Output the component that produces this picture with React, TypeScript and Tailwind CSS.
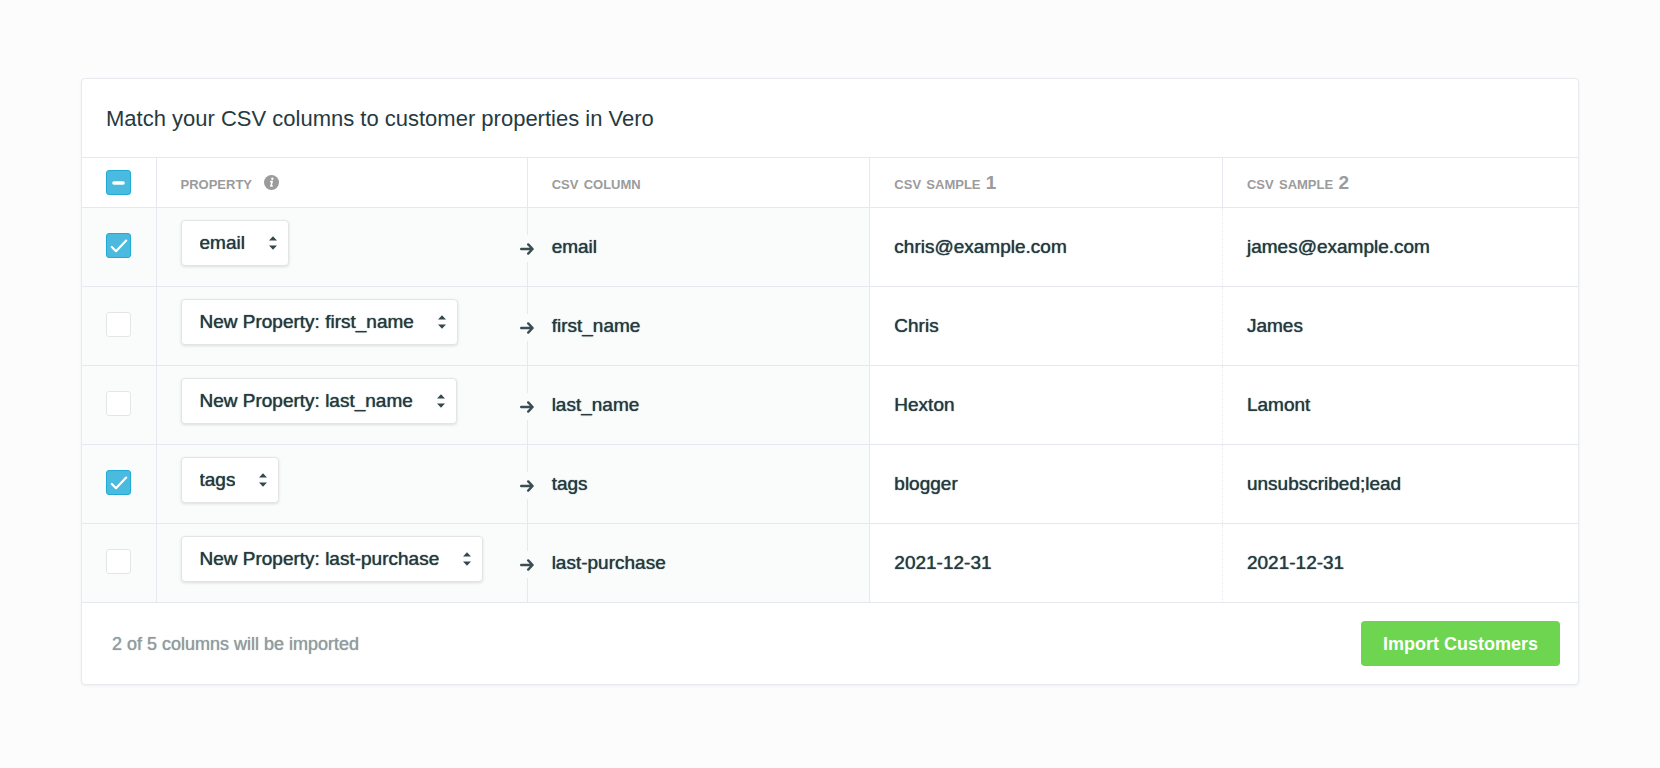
import React, { useEffect, useRef, useState } from 'react';

interface CsvColumn {
  name: string;
  isNew: boolean;
  samples: [string, string];
}

const columns: CsvColumn[] = [
  { name: 'email', isNew: false, samples: ['chris@example.com', 'james@example.com'] },
  { name: 'first_name', isNew: true, samples: ['Chris', 'James'] },
  { name: 'last_name', isNew: true, samples: ['Hexton', 'Lamont'] },
  { name: 'tags', isNew: false, samples: ['blogger', 'unsubscribed;lead'] },
  { name: 'last-purchase', isNew: true, samples: ['2021-12-31', '2021-12-31'] },
];

interface CheckboxProps {
  label: string;
  checked: boolean;
  indeterminate?: boolean;
  onChange: () => void;
}

const Checkbox: React.FC<CheckboxProps> = ({ label, checked, indeterminate = false, onChange }) => {
  const ref = useRef<HTMLInputElement>(null);

  // indeterminate can only be set on the DOM node
  useEffect(() => {
    if (ref.current) ref.current.indeterminate = indeterminate;
  }, [indeterminate]);

  return (
    <span className="relative block size-[25px]">
      <input
        ref={ref}
        type="checkbox"
        aria-label={label}
        checked={checked}
        onChange={onChange}
        className="block size-[25px] appearance-none rounded-[3px] border border-[#e3e6e8] bg-white checked:border-[#1fabd5] checked:bg-[#4abbdf] indeterminate:border-[#1fabd5] indeterminate:bg-[#4abbdf]"
      />
      {(checked || indeterminate) && (
        <svg viewBox="0 0 25 25" className="pointer-events-none absolute inset-0 size-[25px]" fill="none" stroke="white" aria-hidden="true">
          {indeterminate ? (
            <path d="M8 13h9" strokeWidth="3.6" strokeLinecap="round" />
          ) : (
            <path d="M5.8 14l4.2 4.2L20.2 7.6" strokeWidth="2.2" strokeLinecap="round" strokeLinejoin="round" />
          )}
        </svg>
      )}
    </span>
  );
};

const PropertySelect: React.FC<{ column: CsvColumn }> = ({ column }) => (
  <span className="relative inline-block align-top">
    <select
      aria-label={`Property for ${column.name}`}
      className="block h-[46px] appearance-none rounded border border-[#e2e5e7] bg-white pr-[43px] pl-[18px] text-[19px] text-[#263a3f] shadow-[0_1px_3px_rgba(0,0,0,0.12)] [field-sizing:content] [text-shadow:0_0_1px_#263a3f]"
    >
      <option>{column.isNew ? `New Property: ${column.name}` : column.name}</option>
    </select>
    <svg viewBox="0 0 8 14" className="pointer-events-none absolute top-4 right-3 h-[14px] w-2" fill="#33474d" aria-hidden="true">
      <path d="M0 4.6L4 0.3L8 4.6z" />
      <path d="M0 9.4L4 13.7L8 9.4z" />
    </svg>
  </span>
);

const App: React.FC = () => {
  const [selected, setSelected] = useState<string[]>(['email', 'tags']);

  const allSelected = selected.length === columns.length;
  const toggle = (name: string) =>
    setSelected((prev) => (prev.includes(name) ? prev.filter((n) => n !== name) : [...prev, name]));
  const toggleAll = () => setSelected(allSelected ? [] : columns.map((c) => c.name));

  return (
    <main className="min-h-screen bg-[#fcfcfc] px-[81px] py-[78px] font-['Helvetica_Neue','Liberation_Sans',Arial,sans-serif] text-[#263a3f]">
      <section className="rounded border border-[#e7eaee] bg-white shadow-[0_1px_3px_rgba(0,0,0,0.06)]">
        <h1 className="flex h-[78px] items-center px-6 text-[22px]">
          Match your CSV columns to customer properties in Vero
        </h1>

        <table className="w-full table-fixed border-y border-[#e5e8ed] text-left text-[19px]">
          <colgroup>
            <col className="w-[74px]" />
            <col className="w-[26.1%]" />
            <col className="w-[24.1%]" />
            <col className="w-[24.8%]" />
            <col className="w-[25%]" />
          </colgroup>
          <thead className="leading-6 text-[#9b9b9b] [font-variant:small-caps]">
            <tr className="h-[50px]">
              <th className="border-r border-[#e5e8ed] pl-6">
                <Checkbox
                  label="Select all columns"
                  checked={allSelected}
                  indeterminate={selected.length > 0 && !allSelected}
                  onChange={toggleAll}
                />
              </th>
              <th className="border-r border-[#e5e8ed] pl-6">
                <span className="flex items-center gap-3">
                  property
                  <svg viewBox="0 0 16 16" className="size-[15px]" aria-hidden="true">
                    <circle cx="8" cy="8" r="8" fill="#9b9b9b" />
                    <circle cx="8.9" cy="4" r="1.3" fill="white" />
                    <path d="M6.4 6.9h2.2L7.5 11.7h1.9" stroke="white" strokeWidth="1.7" fill="none" />
                  </svg>
                </span>
              </th>
              <th className="border-r border-[#e5e8ed] pl-6">csv column</th>
              <th className="border-r border-[#e5e8ed] pl-6">csv sample 1</th>
              <th className="pl-6">csv sample 2</th>
            </tr>
          </thead>
          <tbody className="[text-shadow:0_0_1px_#263a3f]">
            {columns.map((column) => (
              <tr key={column.name} className="h-[79px] border-t border-[#e5e8ed]">
                <td className="border-r border-[#e5e8ed] bg-[#fafcfc] pb-1 pl-6">
                  <Checkbox
                    label={`Import ${column.name}`}
                    checked={selected.includes(column.name)}
                    onChange={() => toggle(column.name)}
                  />
                </td>
                <td className="border-r border-[#e5e8ed] bg-[#fafcfc] pt-3 pl-6 align-top">
                  <PropertySelect column={column} />
                </td>
                <td className="relative border-r border-[#e5e8ed] bg-[#fafcfc] pl-6">
                  <span className="absolute top-[27px] -left-2 flex h-[27px] items-center bg-[#fafcfc]">
                    <svg viewBox="0 0 14 12" className="h-3 w-[14px]" fill="none" stroke="#3b4d50" strokeWidth="2.4" strokeLinecap="round" strokeLinejoin="round" aria-hidden="true">
                      <path d="M1.2 6h11.2M8.2 1.4L12.6 6L8.2 10.6" />
                    </svg>
                  </span>
                  {column.name}
                </td>
                <td className="border-r border-dotted border-r-[#e9e9e9] pl-6">{column.samples[0]}</td>
                <td className="pl-6">{column.samples[1]}</td>
              </tr>
            ))}
          </tbody>
        </table>

        <footer className="flex h-[81px] items-center justify-between pr-[18px] pl-[30px]">
          <p className="text-lg text-[#929c9e] [text-shadow:0_0_1px_#929c9e]">
            {selected.length} of {columns.length} columns will be imported
          </p>
          <button type="button" className="h-[45px] rounded bg-[#6dd550] px-[22px] text-lg font-bold text-white">
            Import Customers
          </button>
        </footer>
      </section>
    </main>
  );
};

export default App;
